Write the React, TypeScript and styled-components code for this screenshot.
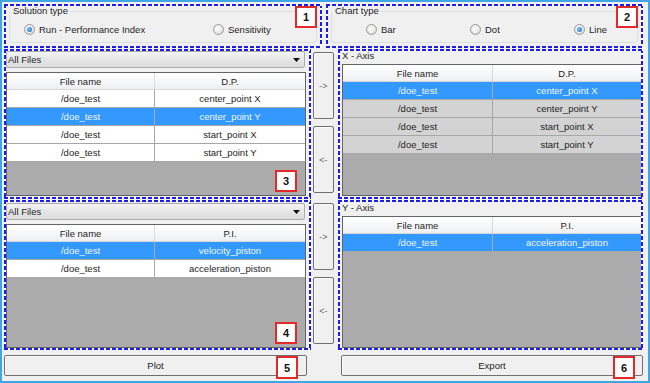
import React from "react";
import styled, { createGlobalStyle } from "styled-components";

const Global = createGlobalStyle`
  html, body { margin: 0; padding: 0; background: #ffffff; }
  body { font-family: "Liberation Sans", Arial, sans-serif; }
`;

const Frame = styled.div`
  width: 650px;
  height: 383px;
  box-sizing: border-box;
  border: 2px solid #3fa6e3;
  background: #f0f0f0;
  padding: 2px 5px 1px 2px;
  display: grid;
  grid-template-rows: 44px 150px 150px 25px;
  row-gap: 1px;
  font-size: 9.5px;
  color: #1e1e1e;
`;

const TopRow = styled.div`
  display: grid;
  grid-template-columns: 318px 1fr;
  gap: 4px;
`;

const Zone = styled.div<{ $pad?: string }>`
  position: relative;
  box-sizing: border-box;
  padding: ${(p) => p.$pad ?? "2px"};
  display: flex;
  flex-direction: column;
  min-width: 0;
  overflow: hidden;

  &::after {
    content: "";
    position: absolute;
    inset: 0;
    pointer-events: none;
    background-image:
      repeating-linear-gradient(90deg, #1c1ce8 0 4px, #ffffff 4px 6px),
      repeating-linear-gradient(90deg, #1c1ce8 0 4px, #ffffff 4px 6px),
      repeating-linear-gradient(180deg, #1c1ce8 0 4px, #ffffff 4px 6px),
      repeating-linear-gradient(180deg, #1c1ce8 0 4px, #ffffff 4px 6px);
    background-size: 100% 2px, 100% 2px, 2px 100%, 2px 100%;
    background-position: top left, bottom left, top left, top right;
    background-repeat: no-repeat;
  }
`;

const GroupBox = styled.fieldset`
  margin: -1px 3px 3px 3px;
  padding: 0 0 0 1px;
  border: 1px solid #dcdfe2;
  border-radius: 3px;
  flex: 1;
  min-width: 0;

  legend {
    padding: 0 2px;
    font-size: 9.5px;
    line-height: 12px;
    color: #1e1e1e;
  }
`;

const RadioRow = styled.div<{ $lead: number; $cols: string }>`
  display: grid;
  grid-template-columns: ${(p) => p.$cols};
  padding-left: ${(p) => p.$lead}px;
  margin-top: 6px;
`;

const RadioItem = styled.label`
  display: flex;
  align-items: center;
  gap: 4px;
  height: 13px;
  white-space: nowrap;
`;

const RadioDot = styled.span<{ $on: boolean }>`
  position: relative;
  width: 9px;
  height: 9px;
  border-radius: 50%;
  border: 1px solid #9a9a9a;
  background: radial-gradient(circle at 40% 40%, #ffffff, #d4d4d4);
  flex: none;

  &::after {
    content: "";
    display: ${(p) => (p.$on ? "block" : "none")};
    position: absolute;
    left: 2px;
    top: 2px;
    width: 5px;
    height: 5px;
    border-radius: 50%;
    background: radial-gradient(circle at 40% 40%, #7cc6ff, #1063b8);
  }
`;

const Tag = styled.span<{ $top?: number; $bottom?: number; $right: number; $h?: number }>`
  position: absolute;
  ${(p) => (p.$top !== undefined ? `top: ${p.$top}px;` : "")}
  ${(p) => (p.$bottom !== undefined ? `bottom: ${p.$bottom}px;` : "")}
  right: ${(p) => p.$right}px;
  width: 18px;
  height: ${(p) => (p.$h ?? 18)}px;
  border: 2px solid #e22a2a;
  background: #ffffff;
  display: flex;
  align-items: center;
  justify-content: center;
  font-family: "Liberation Sans", Arial, sans-serif;
  font-weight: bold;
  font-size: 11px;
  color: #111;
  z-index: 2;
`;

const Section = styled.div`
  display: grid;
  grid-template-columns: 307px 27px 1fr;
`;

const Combo = styled.div`
  height: 17px;
  box-sizing: border-box;
  margin-right: 1px;
  border: 1px solid #acacac;
  border-radius: 2px;
  background: linear-gradient(#f4f4f4, #e6e6e6 50%, #dcdcdc);
  display: flex;
  align-items: center;
  justify-content: space-between;
  padding: 0 4px 0 1px;
  flex: none;
`;

const ShiftCol = styled.div`
  display: flex;
  flex-direction: column;
  gap: 7px;
  padding: 3px 4px 6px 2px;
`;

const ShiftButton = styled.button`
  flex: 1;
  box-sizing: border-box;
  border: 1px solid #707070;
  border-radius: 2px;
  background: #f0f0f0;
  box-shadow: inset 1px 1px 0 #fbfbfb;
  font-family: "Liberation Sans", Arial, sans-serif;
  font-size: 9px;
  color: #6a6a6a;
  padding: 0;
`;

const AxisLabel = styled.div`
  height: 14px;
  line-height: 12px;
  flex: none;
`;

const Grid = styled.div<{ $open?: boolean }>`
  position: relative;
  flex: 1;
  margin-top: 4px;
  border: 1px solid #646464;
  ${(p) => (p.$open ? "border-right: none; margin-top: 0;" : "")}
  background: #ababab;
  overflow: hidden;
`;

const Row = styled.div<{ $cols: string; $bg: string; $fg: string }>`
  display: grid;
  grid-template-columns: ${(p) => p.$cols};
  height: 18px;
  box-sizing: border-box;
  background: ${(p) => p.$bg};
  color: ${(p) => p.$fg};
  border-bottom: 1px solid #a7a7a7;
`;

const HeadRow = styled(Row)`
  height: 17px;
  background: linear-gradient(#ffffff, #f7f8fa 50%, #eeeff1);
  border-bottom: 1px solid #d8d8d8;
`;

const Cell = styled.div`
  display: flex;
  align-items: center;
  justify-content: center;
  white-space: nowrap;
  overflow: hidden;
  border-right: 1px solid #a7a7a7;

  &:last-child {
    border-right: none;
  }
`;

const HeadCell = styled(Cell)`
  border-right-color: #dadada;
`;

const BottomRow = styled.div`
  display: grid;
  grid-template-columns: 303px 1fr;
  column-gap: 34px;
  margin-top: 4px;
`;

const WideButton = styled.button`
  position: relative;
  box-sizing: border-box;
  border: 1px solid #707070;
  border-radius: 2px;
  background: #f0f0f0;
  box-shadow: inset 1px 1px 0 #fcfcfc;
  font-family: "Liberation Sans", Arial, sans-serif;
  font-size: 9.5px;
  color: #1e1e1e;
  padding: 0;
`;

type Item = { file: string; value: string; selected?: boolean };

const ROW_COLORS = {
  white: "#ffffff",
  gray: "#d3d3d3",
};

function DataGrid({
  head,
  items,
  cols,
  shade,
  open,
  children,
}: {
  head: string;
  items: Item[];
  cols: string;
  shade: keyof typeof ROW_COLORS;
  open?: boolean;
  children?: React.ReactNode;
}) {
  return (
    <Grid $open={open}>
      <HeadRow $cols={cols} $bg="" $fg="#1e1e1e">
        <HeadCell>File name</HeadCell>
        <HeadCell>{head}</HeadCell>
      </HeadRow>
      {items.map((it, i) => (
        <Row
          key={i}
          $cols={cols}
          $bg={it.selected ? "#3399ff" : ROW_COLORS[shade]}
          $fg={it.selected ? "#eef6ff" : "#1e1e1e"}
        >
          <Cell>{it.file}</Cell>
          <Cell>{it.value}</Cell>
        </Row>
      ))}
      {children}
    </Grid>
  );
}

function Radio({ label, on }: { label: string; on?: boolean }) {
  return (
    <RadioItem>
      <RadioDot $on={!!on} />
      {label}
    </RadioItem>
  );
}

function Dropdown() {
  return (
    <Combo>
      <span>All Files</span>
      <svg width="7" height="4" viewBox="0 0 7 4">
        <polygon points="0,0 7,0 3.5,4" fill="#111" />
      </svg>
    </Combo>
  );
}

const dpSource: Item[] = [
  { file: "/doe_test", value: "center_point X" },
  { file: "/doe_test", value: "center_point Y", selected: true },
  { file: "/doe_test", value: "start_point X" },
  { file: "/doe_test", value: "start_point Y" },
];

const dpAxis: Item[] = [
  { file: "/doe_test", value: "center_point X", selected: true },
  { file: "/doe_test", value: "center_point Y" },
  { file: "/doe_test", value: "start_point X" },
  { file: "/doe_test", value: "start_point Y" },
];

const piSource: Item[] = [
  { file: "/doe_test", value: "velocity_piston", selected: true },
  { file: "/doe_test", value: "acceleration_piston" },
];

const piAxis: Item[] = [{ file: "/doe_test", value: "acceleration_piston", selected: true }];

export default function App() {
  return (
    <>
      <Global />
      <Frame>
        <TopRow>
          <Zone>
            <GroupBox>
              <legend>Solution type</legend>
              <RadioRow $lead={13} $cols="189px auto">
                <Radio label="Run - Performance Index" on />
                <Radio label="Sensitivity" />
              </RadioRow>
            </GroupBox>
            <Tag $top={2} $right={5}>1</Tag>
          </Zone>
          <Zone>
            <GroupBox>
              <legend>Chart type</legend>
              <RadioRow $lead={33} $cols="104px 104px auto">
                <Radio label="Bar" />
                <Radio label="Dot" />
                <Radio label="Line" on />
              </RadioRow>
            </GroupBox>
            <Tag $top={2} $right={5}>2</Tag>
          </Zone>
        </TopRow>

        <Section>
          <Zone $pad="2px 5px 3px 2px">
            <Dropdown />
            <DataGrid head="D.P." items={dpSource} cols="148px 1fr" shade="white">
              <Tag $bottom={3} $right={8}>3</Tag>
            </DataGrid>
          </Zone>
          <ShiftCol>
            <ShiftButton>-&gt;</ShiftButton>
            <ShiftButton>&lt;-</ShiftButton>
          </ShiftCol>
          <Zone $pad="1px 2px 3px 4px">
            <AxisLabel>X - Axis</AxisLabel>
            <DataGrid head="D.P." items={dpAxis} cols="150px 1fr" shade="gray" open />
          </Zone>
        </Section>

        <Section>
          <Zone $pad="3px 5px 2px 2px">
            <Dropdown />
            <DataGrid head="P.I." items={piSource} cols="148px 1fr" shade="white">
              <Tag $bottom={3} $right={8}>4</Tag>
            </DataGrid>
          </Zone>
          <ShiftCol>
            <ShiftButton>-&gt;</ShiftButton>
            <ShiftButton>&lt;-</ShiftButton>
          </ShiftCol>
          <Zone $pad="2px 2px 2px 4px">
            <AxisLabel>Y - Axis</AxisLabel>
            <DataGrid head="P.I." items={piAxis} cols="150px 1fr" shade="gray" open />
          </Zone>
        </Section>

        <BottomRow>
          <WideButton>
            Plot
            <Tag $top={0} $right={8} $h={19}>5</Tag>
          </WideButton>
          <WideButton>
            Export
            <Tag $top={0} $right={7} $h={19}>6</Tag>
          </WideButton>
        </BottomRow>
      </Frame>
    </>
  );
}
